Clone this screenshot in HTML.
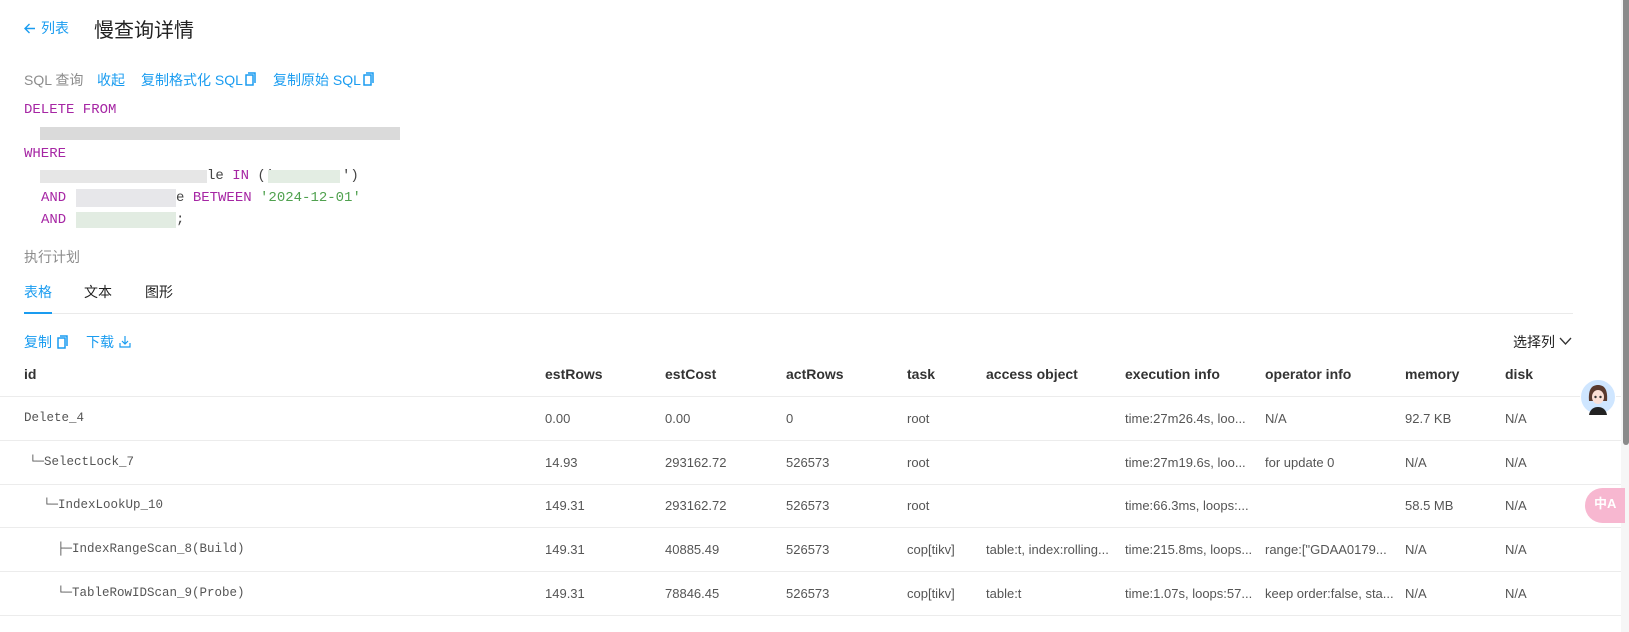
<!DOCTYPE html>
<html><head><meta charset="utf-8">
<style>
*{margin:0;padding:0;box-sizing:border-box}
body{width:1629px;height:632px;overflow:hidden;background:#fff;position:relative;font-family:"Liberation Sans","Noto Sans CJK SC",sans-serif;color:#333;font-size:14px}
.a{position:absolute;white-space:nowrap;line-height:1}
.blue{color:#1a9cf0}
.gray{color:#8c8c8c}
.code{font-family:"Liberation Mono","Noto Sans CJK SC",monospace;font-size:14px;color:#444}
.k{color:#a626a4}.s{color:#50a14f}
.blur{position:absolute;height:13px}
.hd{font-size:14px;color:#333;font-weight:bold}
.td{font-size:13px;color:#555}
.mono{font-family:"Liberation Mono","Noto Sans CJK SC",monospace;font-size:12.5px;color:#555}
.line{position:absolute;left:0;width:1621px;height:1px;background:#ececec}
</style></head><body>
<svg class="a" style="left:23px;top:22px" width="13" height="13" viewBox="0 0 13 13"><path d="M12 6.5H2M6.5 2L2 6.5 6.5 11" stroke="#1a9cf0" stroke-width="1.4" fill="none"/></svg>
<div class="a blue" style="left:41px;top:21px;font-size:14px">列表</div>
<div class="a" style="left:94px;top:21px;font-size:20px;color:#222">慢查询详情</div>

<div class="a gray" style="left:24px;top:73px;font-size:14px">SQL 查询</div>
<div class="a blue" style="left:97px;top:73px">收起</div>
<div class="a blue" style="left:141px;top:73px">复制格式化 SQL</div>
<div class="a blue" style="left:273px;top:73px">复制原始 SQL</div>
<svg class="a" style="left:245px;top:72px" width="11" height="14"><rect x="1" y="3" width="7" height="10" fill="none" stroke="#1a9cf0" stroke-width="1.5"/><path d="M3 1h7v10" fill="none" stroke="#1a9cf0" stroke-width="1.5"/></svg>
<svg class="a" style="left:363px;top:72px" width="11" height="14"><rect x="1" y="3" width="7" height="10" fill="none" stroke="#1a9cf0" stroke-width="1.5"/><path d="M3 1h7v10" fill="none" stroke="#1a9cf0" stroke-width="1.5"/></svg>

<div class="a code k" style="left:24px;top:103px">DELETE FROM</div>
<div class="blur" style="left:40px;top:127px;width:360px;background:#dadada"></div>
<div class="a code k" style="left:24px;top:147px">WHERE</div>
<div class="blur" style="left:40px;top:170px;width:167px;background:#e6e6e6"></div>
<div class="a code" style="left:207px;top:169px">le <span class="k">IN</span> ('</div>
<div class="blur" style="left:268px;top:170px;width:72px;background:#e3ede3"></div>
<div class="a code" style="left:342px;top:169px">')</div>
<div class="a code k" style="left:41px;top:191px">AND</div>
<div class="blur" style="left:76px;top:189px;width:100px;height:18px;background:#e7e7ea"></div>
<div class="a code" style="left:176px;top:191px">e <span class="k">BETWEEN</span> <span class="s">'2024-12-01'</span></div>
<div class="a code k" style="left:41px;top:213px">AND</div>
<div class="blur" style="left:76px;top:212px;width:100px;height:16px;background:#e2ece2"></div>
<div class="a code" style="left:176px;top:213px">;</div>

<div class="a gray" style="left:24px;top:250px;font-size:14px">执行计划</div>
<div class="a blue" style="left:24px;top:285px">表格</div>
<div class="a" style="left:84px;top:285px;color:#222">文本</div>
<div class="a" style="left:145px;top:285px;color:#222">图形</div>
<div style="position:absolute;left:24px;top:313px;width:1549px;height:1px;background:#eaeaea"></div>
<div style="position:absolute;left:24px;top:312px;width:28px;height:2px;background:#1a9cf0"></div>

<div class="a blue" style="left:24px;top:335px">复制</div>
<svg class="a" style="left:57px;top:335px" width="11" height="14"><rect x="1" y="3" width="7" height="10" fill="none" stroke="#1a9cf0" stroke-width="1.5"/><path d="M3 1h7v10" fill="none" stroke="#1a9cf0" stroke-width="1.5"/></svg>
<div class="a blue" style="left:86px;top:335px">下载</div>
<svg class="a" style="left:119px;top:335px" width="12" height="13"><path d="M6 1v8M3 6l3 3 3-3M1 8v4h10V8" fill="none" stroke="#1a9cf0" stroke-width="1.2"/></svg>
<div class="a" style="left:1513px;top:335px;color:#222">选择列</div>
<svg class="a" style="left:1559px;top:337px" width="13" height="9"><path d="M1 1l5.5 6L12 1" fill="none" stroke="#333" stroke-width="1.3"/></svg>

<div class="a hd" style="left:24px;top:367px">id</div>
<div class="a hd" style="left:545px;top:367px">estRows</div>
<div class="a hd" style="left:665px;top:367px">estCost</div>
<div class="a hd" style="left:786px;top:367px">actRows</div>
<div class="a hd" style="left:907px;top:367px">task</div>
<div class="a hd" style="left:986px;top:367px">access object</div>
<div class="a hd" style="left:1125px;top:367px">execution info</div>
<div class="a hd" style="left:1265px;top:367px">operator info</div>
<div class="a hd" style="left:1405px;top:367px">memory</div>
<div class="a hd" style="left:1505px;top:367px">disk</div>
<div class="line" style="top:396px"></div>
<div class="line" style="top:440px"></div>
<div class="line" style="top:484px"></div>
<div class="line" style="top:527px"></div>
<div class="line" style="top:571px"></div>
<div class="line" style="top:615px"></div>

<div class="a mono" style="left:24px;top:412px">Delete_4</div>
<div class="a td" style="left:545px;top:412px">0.00</div><div class="a td" style="left:665px;top:412px">0.00</div><div class="a td" style="left:786px;top:412px">0</div><div class="a td" style="left:907px;top:412px">root</div>
<div class="a td" style="left:1125px;top:412px">time:27m26.4s, loo...</div><div class="a td" style="left:1265px;top:412px">N/A</div><div class="a td" style="left:1405px;top:412px">92.7 KB</div><div class="a td" style="left:1505px;top:412px">N/A</div>

<div class="a mono" style="left:29px;top:456px">└─SelectLock_7</div>
<div class="a td" style="left:545px;top:456px">14.93</div><div class="a td" style="left:665px;top:456px">293162.72</div><div class="a td" style="left:786px;top:456px">526573</div><div class="a td" style="left:907px;top:456px">root</div>
<div class="a td" style="left:1125px;top:456px">time:27m19.6s, loo...</div><div class="a td" style="left:1265px;top:456px">for update 0</div><div class="a td" style="left:1405px;top:456px">N/A</div><div class="a td" style="left:1505px;top:456px">N/A</div>

<div class="a mono" style="left:43px;top:499px">└─IndexLookUp_10</div>
<div class="a td" style="left:545px;top:499px">149.31</div><div class="a td" style="left:665px;top:499px">293162.72</div><div class="a td" style="left:786px;top:499px">526573</div><div class="a td" style="left:907px;top:499px">root</div>
<div class="a td" style="left:1125px;top:499px">time:66.3ms, loops:...</div><div class="a td" style="left:1405px;top:499px">58.5 MB</div><div class="a td" style="left:1505px;top:499px">N/A</div>

<div class="a mono" style="left:57px;top:543px">├─IndexRangeScan_8(Build)</div>
<div class="a td" style="left:545px;top:543px">149.31</div><div class="a td" style="left:665px;top:543px">40885.49</div><div class="a td" style="left:786px;top:543px">526573</div><div class="a td" style="left:907px;top:543px">cop[tikv]</div><div class="a td" style="left:986px;top:543px">table:t, index:rolling...</div>
<div class="a td" style="left:1125px;top:543px">time:215.8ms, loops...</div><div class="a td" style="left:1265px;top:543px">range:["GDAA0179...</div><div class="a td" style="left:1405px;top:543px">N/A</div><div class="a td" style="left:1505px;top:543px">N/A</div>

<div class="a mono" style="left:57px;top:587px">└─TableRowIDScan_9(Probe)</div>
<div class="a td" style="left:545px;top:587px">149.31</div><div class="a td" style="left:665px;top:587px">78846.45</div><div class="a td" style="left:786px;top:587px">526573</div><div class="a td" style="left:907px;top:587px">cop[tikv]</div><div class="a td" style="left:986px;top:587px">table:t</div>
<div class="a td" style="left:1125px;top:587px">time:1.07s, loops:57...</div><div class="a td" style="left:1265px;top:587px">keep order:false, sta...</div><div class="a td" style="left:1405px;top:587px">N/A</div><div class="a td" style="left:1505px;top:587px">N/A</div>

<div style="position:absolute;left:1621px;top:0;width:8px;height:632px;background:#f6f6f6"></div>
<div style="position:absolute;left:1623px;top:0;width:6px;height:445px;background:#8a8a8a;border-radius:0 0 3px 3px"></div>

<svg class="a" style="left:1580px;top:379px" width="36" height="36" viewBox="0 0 36 36">
<circle cx="18" cy="18" r="17.5" fill="#cfe6ff" stroke="#fff" stroke-width="1"/>
<path d="M9 22C8 10 12 6 18 6s10 4 9 16z" fill="#5a3a2e"/>
<ellipse cx="18" cy="18" rx="6" ry="7" fill="#fbe0d6"/>
<path d="M9 36c1-6 5-8 9-8s8 2 9 8z" fill="#222"/>
<circle cx="15.5" cy="18" r="1.2" fill="#333"/><circle cx="20.5" cy="18" r="1.2" fill="#333"/>
</svg>
<div style="position:absolute;left:1585px;top:488px;width:40px;height:35px;border-radius:18px 0 0 18px;background:#f7b7d0"></div>
<div class="a" style="left:1594px;top:497px;color:#fff;font-size:13px;font-weight:bold">中A</div>
</body></html>
